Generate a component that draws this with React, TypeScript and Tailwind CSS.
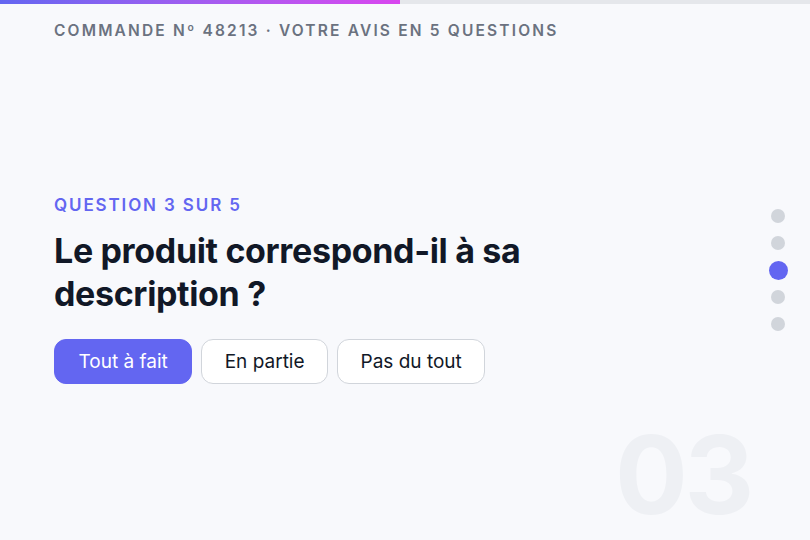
import React from 'react';

const OPTIONS = ['Tout à fait', 'En partie', 'Pas du tout'];
const STEPS = [1, 2, 3, 4, 5];
const CURRENT = 3;

export default function App() {
  return (
    <div
      className="relative w-[810px] h-[540px] overflow-hidden bg-[#f8f9fc] flex flex-col text-[#111827]"
      style={{ fontFamily: 'Inter, "Noto Sans", sans-serif' }}
    >
      {/* progress */}
      <div className="h-1 w-full bg-[#e5e7eb]">
        <div className="h-full w-[400px] bg-gradient-to-r from-[#6366f1] to-[#d946ef]" />
      </div>

      {/* header */}
      <header className="px-[54px] pt-[18px]">
        <p className="text-[15.5px] leading-[18px] font-semibold tracking-[0.14em] text-[#6b7280] m-0 whitespace-nowrap">
          COMMANDE Nº 48213 · VOTRE AVIS EN 5 QUESTIONS
        </p>
      </header>

      {/* question */}
      <main className="flex-1 flex flex-col justify-center px-[54px] pb-[2px]">
        <p className="text-[17px] leading-[20px] font-semibold tracking-[0.11em] text-[#6366f1] m-0">
          QUESTION 3 SUR 5
        </p>
        <h1 className="mt-[14px] text-[34px] leading-[43px] font-bold tracking-[-0.01em] max-w-[520px]">
          Le produit correspond-il à sa description ?
        </h1>
        <div className="mt-[24px] flex gap-[9px]">
          {OPTIONS.map((label, i) => (
            <button
              key={label}
              className={[
                'h-[45px] rounded-xl text-[19px] leading-none border',
                i === 0
                  ? 'px-[23.5px] bg-[#6366f1] border-[#6366f1] text-white'
                  : 'px-[22.5px] bg-white border-[#d1d5db] text-[#111827]',
              ].join(' ')}
            >
              {label}
            </button>
          ))}
        </div>
      </main>

      {/* step dots */}
      <div className="absolute right-[23px] top-[209px] w-[18px] flex flex-col items-center gap-[13px]">
        {STEPS.map((s) => (
          <span
            key={s}
            className={
              s === CURRENT
                ? 'w-[19px] h-[19px] -my-[2.5px] rounded-full bg-[#6366f1]'
                : 'w-[14px] h-[14px] rounded-full bg-[#d1d5db]'
            }
          />
        ))}
      </div>

      {/* big step number */}
      <div className="absolute left-[615px] top-[410px] text-[108px] leading-[130px] font-bold tracking-[-0.03em] text-[#eef0f4] select-none">
        03
      </div>
    </div>
  );
}
